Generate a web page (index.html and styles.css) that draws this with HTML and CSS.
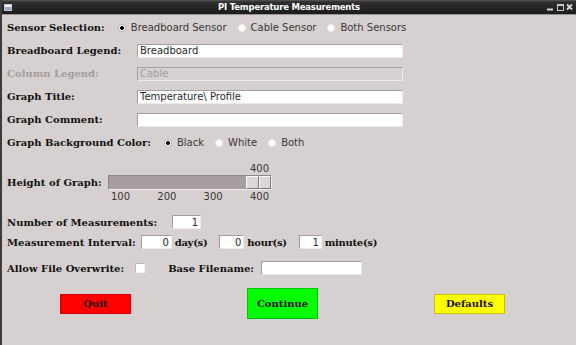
FILE: index.html
```html
<!DOCTYPE html>
<html lang="en">
<head>
    <meta charset="UTF-8">
    <meta name="viewport" content="width=device-width, initial-scale=1.0">
    <title>PI Temperature Measurements</title>
    <link rel="stylesheet" href="styles.css">
</head>
<body>
    <div class="window">
        <div class="titlebar">
            <span class="app-icon"></span>
            <span class="title">PI Temperature Measurements</span>
            <span class="controls">
                <svg width="27" height="8" viewBox="0 0 27 8">
                    <rect x="1" y="5.5" width="6" height="2" fill="#d4d4d4"/>
                    <rect x="11.5" y="1.5" width="6" height="6" fill="none" stroke="#c8c8c8"/>
                    <rect x="11" y="1" width="7" height="2" fill="#c8c8c8"/>
                    <path d="M21 1.5 L26 6.5 M26 1.5 L21 6.5" stroke="#d8d8d8" stroke-width="1.8"/>
                </svg>
            </span>
        </div>

        <form class="panel" onsubmit="return false">
            <div class="row">
                <span class="label">Sensor Selection:</span>
                <div class="radios">
                    <label class="radio"><input type="radio" name="sensor" checked>Breadboard Sensor</label>
                    <label class="radio"><input type="radio" name="sensor">Cable Sensor</label>
                    <label class="radio"><input type="radio" name="sensor">Both Sensors</label>
                </div>
            </div>
            <div class="row field">
                <label class="label" for="bbLegend">Breadboard Legend:</label>
                <input class="entry wide" id="bbLegend" value="Breadboard">
            </div>
            <div class="row field">
                <label class="label disabled" for="colLegend">Column Legend:</label>
                <input class="entry wide" id="colLegend" value="Cable" disabled>
            </div>
            <div class="row field">
                <label class="label" for="graphTitle">Graph Title:</label>
                <input class="entry wide" id="graphTitle" value="Temperature\ Profile">
            </div>
            <div class="row field">
                <label class="label" for="graphComment">Graph Comment:</label>
                <input class="entry wide" id="graphComment" value="">
            </div>
            <div class="row">
                <span class="label">Graph Background Color:</span>
                <div class="radios">
                    <label class="radio"><input type="radio" name="bg" checked>Black</label>
                    <label class="radio"><input type="radio" name="bg">White</label>
                    <label class="radio"><input type="radio" name="bg">Both</label>
                </div>
            </div>

            <div class="slider-row">
                <span class="label">Height of Graph:</span>
                <div class="scale">
                    <div class="scale-value">400</div>
                    <div class="trough">
                        <div class="thumb"><span></span><span></span></div>
                    </div>
                    <div class="ticks">
                        <span>100</span><span>200</span><span>300</span><span>400</span>
                    </div>
                </div>
            </div>

            <div class="row short count-row">
                <label class="label" for="count">Number of Measurements:</label>
                <input class="entry num count" id="count" value="1">
            </div>
            <div class="row short">
                <span class="label">Measurement Interval:</span>
                <input class="entry num days" value="0">
                <span class="label unit">day(s)</span>
                <input class="entry num hours" value="0">
                <span class="label unit">hour(s)</span>
                <input class="entry num minutes" value="1">
                <span class="label unit">minute(s)</span>
            </div>
            <div class="row short overwrite-row">
                <label class="label" for="overwrite">Allow File Overwrite:</label>
                <input type="checkbox" class="check" id="overwrite">
                <label class="label base-label" for="baseName">Base Filename:</label>
                <input class="entry base" id="baseName" value="">
            </div>

            <div class="actions">
                <button class="btn quit">Quit</button>
                <button class="btn continue">Continue</button>
                <button class="btn defaults">Defaults</button>
            </div>
        </form>
    </div>
</body>
</html>
```

FILE: styles.css
```css
* {
    box-sizing: border-box;
}
body {
    margin: 0;
    font-family: "DejaVu Sans", sans-serif;
    font-size: 10px;
}
.window {
    width: 576px;
    height: 345px;
    background: #d6d0d0;
    border-left: 2px solid #3e3b3b;
    overflow: hidden;
}

/* title bar */
.titlebar {
    height: 15px;
    display: grid;
    grid-template-columns: 1fr auto 1fr;
    align-items: center;
    background: linear-gradient(#5a5858 0, #302e2e 2px, #1d1c1c 14px);
    border-bottom: 1px solid #9a9696;
}
.app-icon {
    width: 8px;
    height: 7px;
    margin-left: 2px;
    border: 1px solid #c4c8d0;
    background: linear-gradient(#f2f4f8 0 2px, #98a6bf 2px);
}
.title {
    color: #fff;
    font-weight: bold;
    font-size: 8.5px;
    letter-spacing: -0.2px;
}
.controls {
    justify-self: end;
    display: flex;
    margin-right: 3px;
}

/* form */
.panel {
    padding: 1px 0 0 5px;
}
.row {
    display: flex;
    align-items: center;
    height: 23px;
}
.label {
    font-family: "DejaVu Serif", serif;
    font-weight: bold;
    font-size: 10px;
    color: #111;
}
.label.disabled {
    color: #a29c9c;
}
.field .label {
    width: 130px;
}
.radios {
    display: flex;
    gap: 11px;
    margin-left: 13px;
}
.radio {
    display: flex;
    align-items: center;
    gap: 5px;
    color: #3a3838;
}
.radio input {
    appearance: none;
    margin: 0;
    width: 8px;
    height: 8px;
    border-radius: 50%;
    background: #fff;
    border: 1px solid #ebe8e8;
}
.radio input:checked {
    border-color: #b8b4b4;
    background: radial-gradient(circle, #000 0 1.6px, #fff 2.2px);
}
.entry {
    height: 14px;
    margin: 0;
    padding: 0 2px;
    border: 1px solid;
    border-color: #a29e9e #eeeaea #eeeaea #a29e9e;
    background: #fff;
    font: 10px "DejaVu Sans", sans-serif;
    color: #2a2a2a;
    outline: none;
}
.entry.wide {
    width: 266px;
}
.entry:disabled {
    background: #d6d0d0;
    color: #a29e9e;
}
.entry.num {
    text-align: right;
}

/* scale */
.slider-row {
    display: flex;
    align-items: center;
    margin-top: 8px;
}
.slider-row .label {
    width: 101px;
}
.scale {
    width: 164px;
}
.scale-value {
    width: 25px;
    margin-left: auto;
    text-align: center;
    line-height: 13px;
    color: #3a3838;
}
.trough {
    height: 15px;
    display: flex;
    border: 1px solid;
    border-color: #8e8888 #f2f0f0 #f2f0f0 #8e8888;
    background: #a69e9e;
}
.thumb {
    margin-left: auto;
    width: 25px;
    display: flex;
}
.thumb span {
    flex: 1;
    background: #dcd7d7;
    border: 1px solid;
    border-color: #fbfafa #7c7676 #7c7676 #fbfafa;
}
.ticks {
    display: flex;
    justify-content: space-between;
    color: #3a3838;
}
.ticks span {
    width: 25px;
    text-align: center;
    line-height: 13px;
}

.short {
    height: 20px;
}
.count-row {
    margin-top: 9px;
}
.count {
    width: 29px;
    margin-left: 15px;
}
.days {
    width: 31px;
    margin-left: 5px;
}
.hours {
    width: 25px;
    margin-left: 12px;
}
.minutes {
    width: 23px;
    margin-left: 12px;
}
.unit {
    margin-left: 3px;
    letter-spacing: -0.3px;
}
.overwrite-row {
    margin-top: 6px;
}
.check {
    appearance: none;
    margin: 0 0 0 11px;
    width: 10px;
    height: 10px;
    background: #fff;
    border: 1px solid;
    border-color: #bcb8b8 #f4f2f2 #f4f2f2 #bcb8b8;
}
.base-label {
    margin-left: 23px;
}
.base {
    width: 101px;
    margin-left: 7px;
}

/* buttons */
.actions {
    display: flex;
    justify-content: space-between;
    align-items: center;
    height: 31px;
    margin-top: 10px;
    padding: 0 71px 0 53px;
}
.btn {
    width: 71px;
    height: 20px;
    padding: 0;
    border: 1px solid;
    font: bold 10px "DejaVu Serif", serif;
    color: #1a0c0c;
}
.quit {
    background: #ff0000;
    border-color: #d00000;
}
.continue {
    height: 31px;
    background: #00ff00;
    border-color: #00c400;
}
.defaults {
    background: #ffff00;
    border-color: #c8c000;
}
```
